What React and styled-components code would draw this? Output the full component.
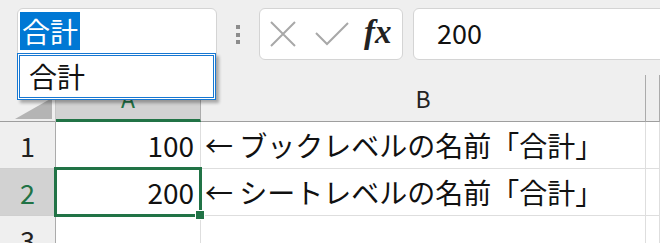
import React from 'react';
import styled, { createGlobalStyle } from 'styled-components';

const GlobalStyle = createGlobalStyle`
    body {
        margin: 0;
        background: #efefef;
        overflow: hidden;
        font-family: "Noto Sans CJK JP", "Noto Sans", sans-serif;
    }
`;

const Page = styled.div`
    width: 660px;
    height: 243px;
    overflow: hidden;
    background: #efefef;
`;

const TopBar = styled.div`
    position: relative;
    z-index: 5;
    display: flex;
    align-items: flex-start;
    height: 75px;
    box-sizing: border-box;
    padding: 8px 0 0 17px;
`;

const NameBoxWrap = styled.div`
    position: relative;
    width: 200px;
    height: 52px;
    flex-shrink: 0;
`;

const NameBox = styled.div`
    height: 52px;
    box-sizing: border-box;
    background: white;
    border: 1px solid #d4d4d4;
    border-radius: 6px;
    padding: 3px 2px;
`;

const Selected = styled.span`
    display: inline-block;
    background: #0078d4;
    color: white;
    font-size: 28px;
    line-height: 38px;
    padding: 0 2px;
`;

const NameList = styled.div`
    position: absolute;
    top: 45px;
    left: 0;
    width: 199px;
    height: 47px;
    box-sizing: border-box;
    background: white;
    border: 1px solid #1677d2;
    box-shadow: inset 0 0 0 1px #fff, inset 0 0 0 2px #1677d2, 3px 3px 3px rgba(0, 0, 0, 0.3);
    padding-left: 11px;
    font-size: 28px;
    line-height: 45px;
    color: #111;
`;

const Dots = styled.div`
    display: flex;
    flex-direction: column;
    gap: 3.5px;
    margin: 17px 19px 0 19px;

    span {
        width: 4px;
        height: 4px;
        background: #8c8c8c;
    }
`;

const FormulaButtons = styled.div`
    display: flex;
    align-items: center;
    width: 144px;
    height: 52px;
    flex-shrink: 0;
    box-sizing: border-box;
    background: white;
    border: 1px solid #d4d4d4;
    border-radius: 6px;
    padding-left: 10px;

    svg {
        display: block;
    }
`;

const Fx = styled.i`
    font-family: "Liberation Serif", "DejaVu Serif", serif;
    font-size: 33px;
    font-weight: bold;
    color: #222;
    margin-left: 15px;
    line-height: 1;
    margin-top: -4px;
`;

const FormulaInput = styled.div`
    width: 280px;
    height: 52px;
    flex-shrink: 0;
    margin-left: 10px;
    box-sizing: border-box;
    background: white;
    border: 1px solid #d4d4d4;
    border-radius: 6px;
    padding-left: 23px;
    font-size: 27px;
    line-height: 48px;
    color: #111;
`;

const Grid = styled.div`
    display: grid;
    grid-template-columns: 56px 145px 445px 1fr;
    grid-auto-rows: 47px;
`;

const Corner = styled.div`
    box-sizing: border-box;
    border-right: 1px solid #c6c6c6;
    border-bottom: 1px solid #9e9e9e;
    display: flex;
    align-items: flex-end;
    justify-content: flex-end;
    padding: 0 3px 2px 0;

    span {
        width: 0;
        height: 0;
        border-left: 37px solid transparent;
        border-bottom: 21px solid #b4b4b4;
    }
`;

const ColHead = styled.div`
    box-sizing: border-box;
    background: ${(props) => (props.active ? '#d2d2d2' : '#efefef')};
    color: ${(props) => (props.active ? '#217346' : '#222')};
    border-right: 1px solid #ababab;
    border-bottom: ${(props) => (props.active ? '3px solid #217346' : '1px solid #9e9e9e')};
    display: flex;
    align-items: center;
    justify-content: center;
    font-size: 23px;
    padding-top: ${(props) => (props.active ? '2px' : '0')};
`;

const RowHead = styled.div`
    box-sizing: border-box;
    background: ${(props) => (props.active ? '#d2d2d2' : '#efefef')};
    color: ${(props) => (props.active ? '#217346' : '#222')};
    border-right: 1px solid #ababab;
    border-bottom: 1px solid #cfcfcf;
    display: flex;
    align-items: center;
    justify-content: center;
    font-size: 27px;
`;

const Cell = styled.div`
    position: relative;
    box-sizing: border-box;
    background: white;
    border-right: 1px solid #dedede;
    border-bottom: 1px solid #dedede;
    display: flex;
    align-items: center;
    justify-content: ${(props) => (props.right ? 'flex-end' : 'flex-start')};
    padding: ${(props) => (props.right ? '0 6px 0 0' : '0 0 0 4px')};
    font-size: 28px;
    color: #111;
    white-space: nowrap;
`;

const Selection = styled.div`
    position: absolute;
    top: -2px;
    left: -2px;
    right: -2px;
    bottom: -2px;
    border: 3px solid #217346;
    z-index: 3;
    pointer-events: none;
`;

const FillHandle = styled.div`
    position: absolute;
    left: 140px;
    top: 42px;
    width: 8px;
    height: 8px;
    background: #217346;
    outline: 1px solid white;
    z-index: 4;
`;

const CrossIcon = () => (
    <svg width="26" height="26" viewBox="0 0 26 26">
        <path d="M1 1 L25 25 M25 1 L1 25" stroke="#a8a8a8" strokeWidth="2" fill="none" />
    </svg>
);

const CheckIcon = () => (
    <svg width="34" height="24" viewBox="0 0 34 24" style={{ marginLeft: 19 }}>
        <path d="M1 11 L12 22 L33 1" stroke="#a8a8a8" strokeWidth="2" fill="none" />
    </svg>
);

const App = () => {
    return (
        <Page>
            <GlobalStyle />
            <TopBar>
                <NameBoxWrap>
                    <NameBox>
                        <Selected>合計</Selected>
                    </NameBox>
                    <NameList>合計</NameList>
                </NameBoxWrap>
                <Dots>
                    <span />
                    <span />
                    <span />
                </Dots>
                <FormulaButtons>
                    <CrossIcon />
                    <CheckIcon />
                    <Fx>fx</Fx>
                </FormulaButtons>
                <FormulaInput>200</FormulaInput>
            </TopBar>
            <Grid>
                <Corner><span /></Corner>
                <ColHead active>A</ColHead>
                <ColHead>B</ColHead>
                <ColHead />

                <RowHead>1</RowHead>
                <Cell right>100</Cell>
                <Cell>← ブックレベルの名前「合計」</Cell>
                <Cell />

                <RowHead active>2</RowHead>
                <Cell right>
                    200
                    <Selection />
                    <FillHandle />
                </Cell>
                <Cell>← シートレベルの名前「合計」</Cell>
                <Cell />

                <RowHead>3</RowHead>
                <Cell right />
                <Cell />
                <Cell />
            </Grid>
        </Page>
    );
};

export default App;
